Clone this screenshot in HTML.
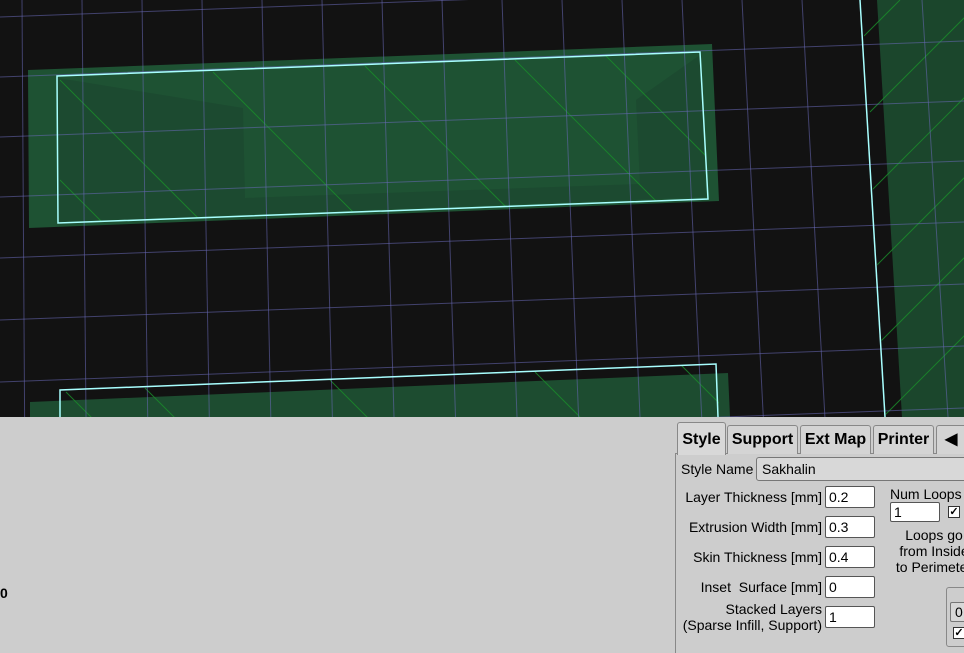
<!DOCTYPE html>
<html><head><meta charset="utf-8"><style>
*{margin:0;padding:0;box-sizing:border-box}
body{width:964px;height:642px;overflow:hidden;background:#cdcdcd;position:relative;font-family:"Liberation Sans",Arial,sans-serif;color:#000}
svg{position:absolute;left:0;top:0}
.a{position:absolute;white-space:nowrap}
.tab{position:absolute;top:425px;height:29px;border:1px solid #888;border-bottom:none;border-radius:3px 3px 0 0;background:#d4d4d4;font-weight:bold;font-size:16px;line-height:27px;text-align:center}
.lbl{position:absolute;font-size:14px;text-align:right;width:160px;left:662px}
.inp{position:absolute;left:825px;width:50px;height:22px;background:#fff;border:1px solid #555;border-radius:2px;font-size:14px;line-height:20px;padding-left:3px}
.cb{position:absolute;width:12px;height:12px;background:#fff;border:1px solid #333;font-size:11px;line-height:10px;text-align:center;font-weight:bold}
</style></head><body>
<svg width="964" height="417" viewBox="0 0 964 417">
<rect width="964" height="417" fill="#121212"/>
<polygon points="877,0 964,0 964,417 902,417" fill="#1b462c"/>
<polygon points="28,70 712,44 719,201 29,228" fill="#1e5233"/>
<polygon points="58,78 243,108 245,198 640,184 636,100 700,55 706,197 58,222" fill="#1b4830" opacity="0.8"/>
<polygon points="30,402 728,373 730,417 30,417" fill="#1d4c30"/>
<g stroke="#1a8a2a" stroke-width="1" fill="none" stroke-opacity="0.85">
<clipPath id="c1"><polygon points="57,76 700,52 708,199 58,223"/></clipPath>
<g clip-path="url(#c1)">
<line x1="60" y1="180" x2="110" y2="230"/><line x1="60" y1="80" x2="200" y2="220"/>
<line x1="213" y1="72" x2="360" y2="219"/><line x1="365" y1="66" x2="515" y2="216"/>
<line x1="515" y1="60" x2="670" y2="215"/><line x1="600" y1="50" x2="760" y2="210"/>
</g>
<clipPath id="c2"><polygon points="60,390 716,364 720,417 60,417"/></clipPath>
<g clip-path="url(#c2)">
<line x1="66" y1="392" x2="95" y2="421"/><line x1="145" y1="388" x2="180" y2="423"/>
<line x1="330" y1="380" x2="370" y2="420"/><line x1="535" y1="372" x2="580" y2="417"/>
<line x1="680" y1="364" x2="730" y2="414"/>
</g>
<clipPath id="c3"><polygon points="862,0 964,0 964,417 886,417"/></clipPath>
<g clip-path="url(#c3)">
<line x1="864" y1="36" x2="900" y2="0"/><line x1="870" y1="112" x2="982" y2="0"/>
<line x1="872" y1="190" x2="1062" y2="0"/><line x1="876" y1="266" x2="1142" y2="0"/>
<line x1="880" y1="342" x2="1222" y2="0"/><line x1="880" y1="420" x2="1300" y2="0"/>
</g>
</g>
<g stroke="#6a6ab8" stroke-opacity="0.55" stroke-width="1">
<line x1="22" y1="0" x2="24.6" y2="417"/><line x1="82" y1="0" x2="86" y2="417"/>
<line x1="142" y1="0" x2="147.7" y2="417"/><line x1="202" y1="0" x2="209.3" y2="417"/>
<line x1="262" y1="0" x2="270.8" y2="417"/><line x1="322" y1="0" x2="332.4" y2="417"/>
<line x1="382" y1="0" x2="394" y2="417"/><line x1="442" y1="0" x2="455.5" y2="417"/>
<line x1="502" y1="0" x2="517" y2="417"/><line x1="562" y1="0" x2="578.6" y2="417"/>
<line x1="622" y1="0" x2="640" y2="417"/><line x1="682" y1="0" x2="701.7" y2="417"/>
<line x1="742" y1="0" x2="763.3" y2="417"/><line x1="802" y1="0" x2="824.9" y2="417"/>
<line x1="922" y1="0" x2="948" y2="417"/>
<line x1="0" y1="17" x2="964" y2="-19"/><line x1="0" y1="77" x2="964" y2="41"/>
<line x1="0" y1="137" x2="964" y2="101"/><line x1="0" y1="197" x2="964" y2="161"/>
<line x1="0" y1="258" x2="964" y2="222"/><line x1="0" y1="320" x2="964" y2="284"/>
<line x1="0" y1="382" x2="964" y2="346"/><line x1="0" y1="444" x2="964" y2="408"/>
</g>
<g stroke="#a8ffff" stroke-width="1.5" fill="none">
<polygon points="57,76 700,52 708,199 58,223"/>
<polyline points="60,417 60,390 716,364 718,417"/>
<line x1="860" y1="0" x2="885" y2="417"/>
</g>
</svg>
<div class="a" style="left:0;top:585px;font-size:14px;font-weight:bold">0</div>

<div class="a" style="left:675px;top:453px;width:300px;height:200px;border-left:1px solid #888;border-top:1px solid #888"></div>
<div class="tab" style="left:677px;top:422px;height:33px;width:49px;background:#d8d8d8;line-height:33px">Style</div>
<div class="tab" style="left:727px;width:71px">Support</div>
<div class="tab" style="left:800px;width:71px">Ext Map</div>
<div class="tab" style="left:873px;width:61px">Printer</div>
<div class="tab" style="left:936px;width:40px;text-align:left;padding-left:8px">&#9664;</div>

<div class="a" style="left:681px;top:461px;font-size:14px">Style Name</div>
<div class="a" style="left:756px;top:457px;width:220px;height:24px;border:1px solid #777;border-radius:3px;background:#d8d8d8;font-size:14px;line-height:22px;padding-left:5px">Sakhalin</div>

<div class="lbl" style="top:489px">Layer Thickness [mm]</div>
<div class="inp" style="top:486px">0.2</div>
<div class="lbl" style="top:519px">Extrusion Width [mm]</div>
<div class="inp" style="top:516px">0.3</div>
<div class="lbl" style="top:549px">Skin Thickness [mm]</div>
<div class="inp" style="top:546px">0.4</div>
<div class="lbl" style="top:579px">Inset&nbsp; Surface [mm]</div>
<div class="inp" style="top:576px">0</div>
<div class="lbl" style="top:601px;line-height:16px">Stacked Layers<br>(Sparse Infill, Support)</div>
<div class="inp" style="top:606px">1</div>

<div class="a" style="left:890px;top:486px;font-size:14px">Num Loops</div>
<div class="inp" style="left:890px;top:502px;height:20px;line-height:18px">1</div>
<div class="cb" style="left:948px;top:506px">&#10003;</div>
<div class="a" style="left:884px;top:527px;width:100px;text-align:center;font-size:14px;line-height:16px">Loops go<br>from Inside<br>to Perimeter</div>
<div class="a" style="left:946px;top:587px;width:30px;height:60px;border:1px solid #888;border-radius:3px"></div>
<div class="a" style="left:950px;top:602px;width:30px;height:20px;border:1px solid #777;border-radius:2px;background:#d8d8d8;font-size:14px;line-height:18px;padding-left:4px">0</div>
<div class="cb" style="left:953px;top:627px">&#10003;</div>
</body></html>
